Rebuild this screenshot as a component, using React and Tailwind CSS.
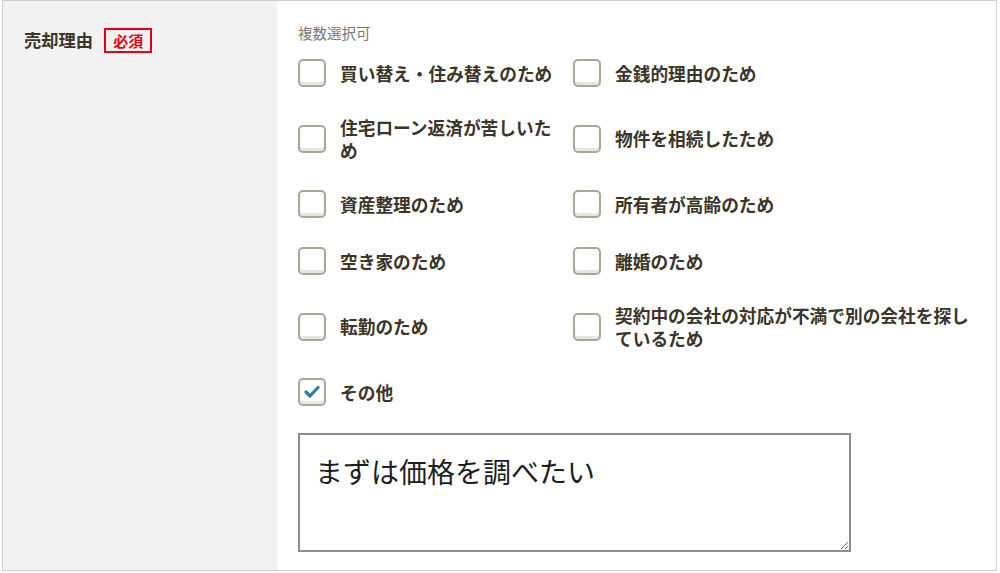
import React, { useState } from 'react';

const OPTIONS = [
  '買い替え・住み替えのため',
  '金銭的理由のため',
  '住宅ローン返済が苦しいため',
  '物件を相続したため',
  '資産整理のため',
  '所有者が高齢のため',
  '空き家のため',
  '離婚のため',
  '転勤のため',
  '契約中の会社の対応が不満で別の会社を探しているため',
  'その他',
];

const font = { fontFamily: '"Noto Sans CJK JP", "Noto Sans", sans-serif' };

// Checkbox row
const CheckItem = ({ label, checked, onToggle, left }) => (
  <label className={`flex items-center gap-[14px] cursor-pointer ${left ? 'pr-[12px]' : ''}`}>
    <span className="relative shrink-0 w-[28px] h-[28px] rounded-[5px] border-2 border-[#aaa795] bg-white shadow-[inset_0_-3px_0_#e6e6e2] flex items-center justify-center">
      {checked && (
        <svg width="16" height="13" viewBox="0 0 16 13" className="mb-[2px]">
          <path d="M2 7 L6 11 L14 2.5" fill="none" stroke="#2b7ea9" strokeWidth="3.2" strokeLinecap="round" strokeLinejoin="round" />
        </svg>
      )}
    </span>
    <input type="checkbox" className="hidden" checked={checked} onChange={onToggle} />
    <span className="text-[17.7px] leading-[22.5px] font-bold text-[#3c3528]">{label}</span>
  </label>
);

const App = () => {
  const [checked, setChecked] = useState({ 'その他': true });
  const [memo, setMemo] = useState('まずは価格を調べたい');

  return (
    <div className="w-[1000px] h-[573px] bg-white" style={font}>
      <div className="ml-[2px] w-[995px] h-[571px] border border-[#cfcfcf] flex">
        {/* Label cell */}
        <div className="w-[274px] bg-[#f2f2f2] pl-[21px] pt-[26px]">
          <div className="flex items-center gap-[11px]">
            <span className="text-[17.3px] font-bold text-[#3c3528] leading-[26px]">売却理由</span>
            <span className="border-2 border-[#e60012] text-[#e60012] text-[15px] font-bold leading-[21px] px-[7px]">必須</span>
          </div>
        </div>

        {/* Field cell */}
        <div className="flex-1 pl-[21px] pt-[23px] pr-[18px]">
          <p className="text-[14.5px] leading-[18px] text-[#777]">複数選択可</p>
          <div className="mt-[17px] grid grid-cols-[275px_1fr] gap-y-[29px] items-center">
            {OPTIONS.map((o, i) => (
              <CheckItem
                key={o}
                label={o}
                left={i % 2 === 0}
                checked={!!checked[o]}
                onToggle={() => setChecked((p) => ({ ...p, [o]: !p[o] }))}
              />
            ))}
          </div>
          <textarea
            value={memo}
            onChange={(e) => setMemo(e.target.value)}
            className="mt-[27px] block w-[553px] h-[119px] border-2 border-[#8d8d8d] px-[15px] pt-[17px] text-[28px] leading-[38px] text-[#1e1e1e] outline-none"
            style={font}
          />
        </div>
      </div>
    </div>
  );
};

export default App;
